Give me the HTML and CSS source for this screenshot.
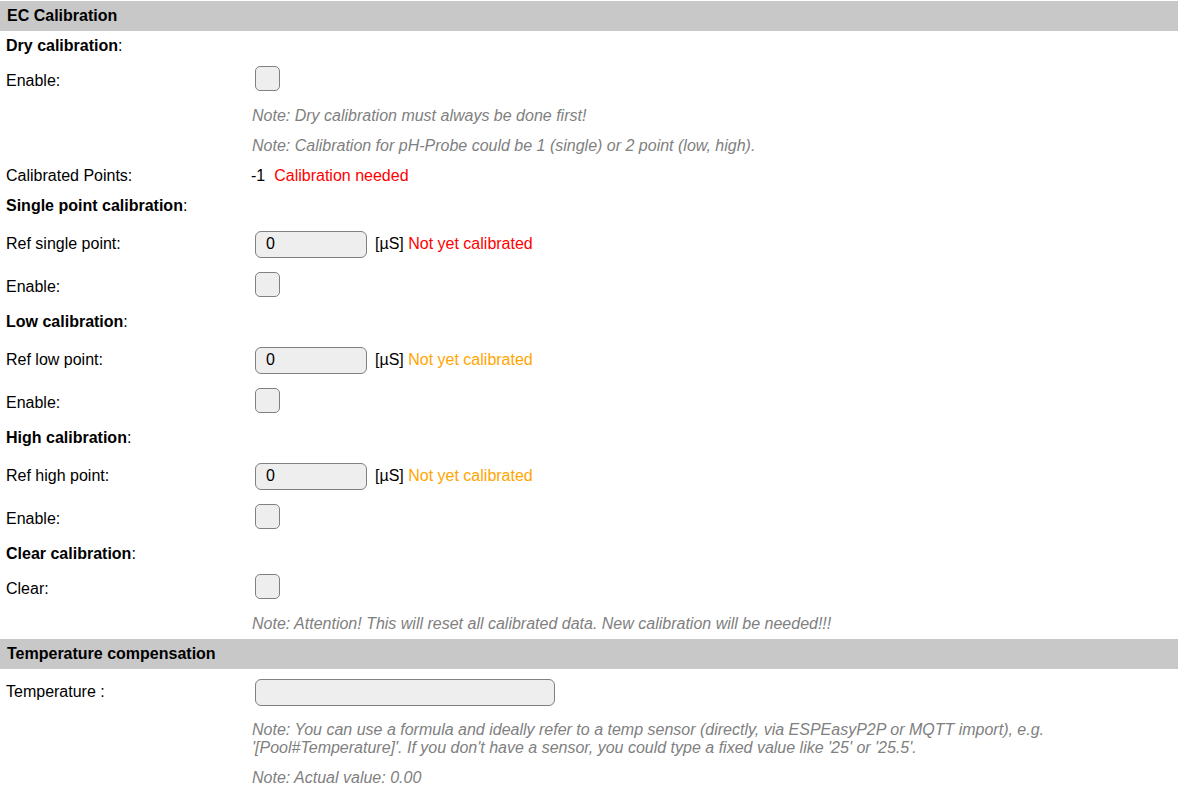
FILE: index.html
```html
<!DOCTYPE html>
<html>
<head>
<meta charset="utf-8">
<link rel="stylesheet" href="styles.css">
</head>
<body>
<div class="form">
  <div class="hdr">EC Calibration</div>

  <div class="row r30"><div class="lbl"><b>Dry calibration</b>:</div><div class="val"></div></div>
  <div class="row r40"><div class="lbl">Enable:</div><div class="val top"><input type="checkbox" class="cb"></div></div>
  <div class="row r30"><div class="lbl"></div><div class="val note">Note: Dry calibration must always be done first!</div></div>
  <div class="row r30"><div class="lbl"></div><div class="val note">Note: Calibration for pH-Probe could be 1 (single) or 2 point (low, high).</div></div>
  <div class="row r30"><div class="lbl">Calibrated Points:</div><div class="val plain">-1 <span class="red gap">Calibration needed</span></div></div>

  <div class="row r30"><div class="lbl"><b>Single point calibration</b>:</div><div class="val"></div></div>
  <div class="row r46"><div class="lbl">Ref single point:</div><div class="val"><input class="txt small" value="0"><span>[µS] <span class="red">Not yet calibrated</span></span></div></div>
  <div class="row r40"><div class="lbl">Enable:</div><div class="val top"><input type="checkbox" class="cb"></div></div>

  <div class="row r30"><div class="lbl"><b>Low calibration</b>:</div><div class="val"></div></div>
  <div class="row r46"><div class="lbl">Ref low point:</div><div class="val"><input class="txt small" value="0"><span>[µS] <span class="orange">Not yet calibrated</span></span></div></div>
  <div class="row r40"><div class="lbl">Enable:</div><div class="val top"><input type="checkbox" class="cb"></div></div>

  <div class="row r30"><div class="lbl"><b>High calibration</b>:</div><div class="val"></div></div>
  <div class="row r46"><div class="lbl">Ref high point:</div><div class="val"><input class="txt small" value="0"><span>[µS] <span class="orange">Not yet calibrated</span></span></div></div>
  <div class="row r40"><div class="lbl">Enable:</div><div class="val top"><input type="checkbox" class="cb"></div></div>

  <div class="row r30"><div class="lbl"><b>Clear calibration</b>:</div><div class="val"></div></div>
  <div class="row r40"><div class="lbl">Clear:</div><div class="val top"><input type="checkbox" class="cb"></div></div>
  <div class="row r30"><div class="lbl"></div><div class="val note">Note: Attention! This will reset all calibrated data. New calibration will be needed!!!</div></div>

  <div class="hdr">Temperature compensation</div>
  <div class="row r46"><div class="lbl">Temperature :</div><div class="val"><input class="txt wide" value=""></div></div>
  <div class="row multi"><div class="lbl"></div><div class="val note">Note: You can use a formula and ideally refer to a temp sensor (directly, via ESPEasyP2P or MQTT import), e.g. '[Pool#Temperature]'. If you don't have a sensor, you could type a fixed value like '25' or '25.5'.</div></div>
  <div class="row r30"><div class="lbl"></div><div class="val note">Note: Actual value: 0.00</div></div>
</div>
</body>
</html>
```

FILE: styles.css
```css
* { box-sizing: border-box; }
html, body { margin: 0; padding: 0; background: #fff; }
body {
  font-family: "Liberation Sans", Arial, sans-serif;
  font-size: 16px;
  color: #000;
  line-height: normal;
}
.form {
  width: 1178px;
  padding-top: 1px;
  display: flex;
  flex-direction: column;
}
.hdr {
  height: 30px;
  background: #c8c8c8;
  font-weight: bold;
  padding-left: 7px;
  display: flex;
  align-items: center;
}
.row {
  display: flex;
}
.r30 { height: 30px; }
.r40 { height: 40px; }
.r46 { height: 46px; }
.multi { padding: 6px 0; }
.lbl {
  width: 250px;
  flex: 0 0 250px;
  padding-left: 6px;
  display: flex;
  align-items: center;
}
.val {
  flex: 1;
  display: flex;
  align-items: center;
  padding-left: 2px;
  padding-right: 4px;
}
.val.top { align-items: flex-start; padding-top: 5px; }
.plain { padding-left: 1px; }
.note {
  font-style: italic;
  color: #808080;
  display: block;
  align-self: center;
}
.multi .lbl { align-items: flex-start; }
.red { color: #ff0000; }
.orange { color: #ffa500; }
.gap { margin-left: 9px; }
.cb {
  appearance: none;
  -webkit-appearance: none;
  margin: 0 0 0 3px;
  width: 25px;
  height: 25px;
  border: 1px solid #808080;
  border-radius: 5px;
  background: #eeeeee;
}
.txt {
  margin: 0 8px 0 3px;
  height: 27px;
  border: 1px solid #808080;
  border-radius: 6px;
  background: #eeeeee;
  font-family: "Liberation Sans", Arial, sans-serif;
  font-size: 16px;
  color: #000;
  padding: 0 0 0 10px;
}
.small { width: 112px; }
.wide { width: 300px; }
```
